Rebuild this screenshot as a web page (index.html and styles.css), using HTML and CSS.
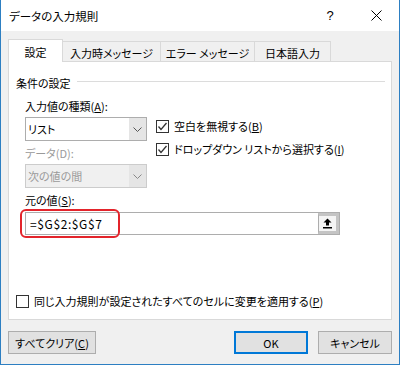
FILE: index.html
```html
<!DOCTYPE html>
<html lang="ja">
<head>
    <meta charset="UTF-8">
    <title>データの入力規則</title>
    <link rel="stylesheet" href="styles.css">
</head>
<body>
    <div class="dialog">
        <div class="titlebar">
            <span class="title">データの入力規則</span>
            <span class="title-btn help">?</span>
            <span class="title-btn close">
                <svg width="11" height="11" viewBox="0 0 11 11">
                    <path d="M0.5 0.5 L10.5 10.5 M10.5 0.5 L0.5 10.5" stroke="#000" stroke-width="1" fill="none"/>
                </svg>
            </span>
        </div>

        <div class="content">
            <div class="tabs">
                <div class="tab active tab-settings">設定</div>
                <div class="tab tab-input">入力時メッセージ</div>
                <div class="tab tab-error">エラー メッセージ</div>
                <div class="tab tab-ime">日本語入力</div>
            </div>

            <div class="panel">
                <div class="group-title">条件の設定</div>

                <div class="criteria">
                    <div class="col-left">
                        <div class="label">入力値の種類(<u>A</u>):</div>
                        <div class="select">
                            <span class="select-value">リスト</span>
                            <span class="select-arrow">
                                <svg width="9" height="5" viewBox="0 0 9 5"><path d="M0.5 0.5 L4.5 4.5 L8.5 0.5" stroke="#555" fill="none"/></svg>
                            </span>
                        </div>
                        <div class="label disabled spaced">データ(D):</div>
                        <div class="select disabled">
                            <span class="select-value">次の値の間</span>
                            <span class="select-arrow">
                                <svg width="9" height="5" viewBox="0 0 9 5"><path d="M0.5 0.5 L4.5 4.5 L8.5 0.5" stroke="#888" fill="none"/></svg>
                            </span>
                        </div>
                    </div>

                    <div class="col-right">
                        <div class="check-row">
                            <span class="check checked">
                                <svg width="11" height="11" viewBox="0 0 11 11"><path d="M1.5 5.5 L4 8.5 L9.5 2" stroke="#333" stroke-width="1.3" fill="none"/></svg>
                            </span>
                            <span>空白を無視する(<u>B</u>)</span>
                        </div>
                        <div class="check-row">
                            <span class="check checked">
                                <svg width="11" height="11" viewBox="0 0 11 11"><path d="M1.5 5.5 L4 8.5 L9.5 2" stroke="#333" stroke-width="1.3" fill="none"/></svg>
                            </span>
                            <span>ドロップダウン リストから選択する(<u>I</u>)</span>
                        </div>
                    </div>
                </div>

                <div class="source-block">
                    <div class="label">元の値(<u>S</u>):</div>
                    <div class="source">
                        <span class="source-value">=$G$2:$G$7</span>
                        <span class="ref-btn">
                            <svg width="9" height="11" viewBox="0 0 9 11">
                                <path d="M4.5 0.5 L8.5 4.5 L6 4.5 L6 7.5 L3 7.5 L3 4.5 L0.5 4.5 Z" fill="#000"/>
                                <rect x="0" y="9" width="9" height="1.5" fill="#000"/>
                            </svg>
                        </span>
                        <span class="highlight"></span>
                    </div>
                </div>

                <div class="check-row apply">
                    <span class="check"></span>
                    <span>同じ入力規則が設定されたすべてのセルに変更を適用する(<u>P</u>)</span>
                </div>
            </div>

            <div class="footer">
                <button class="btn btn-clear">すべてクリア(<u>C</u>)</button>
                <button class="btn btn-ok">OK</button>
                <button class="btn btn-cancel">キャンセル</button>
            </div>
        </div>
    </div>
</body>
</html>
```

FILE: styles.css
```css
* {
    box-sizing: border-box;
}

body {
    margin: 0;
    font-family: "Noto Sans CJK JP", "Noto Sans", sans-serif;
    font-size: 11px;
    line-height: 16px;
    color: #000;
    font-feature-settings: "palt";
}

u {
    text-underline-offset: 1px;
}

.dialog {
    width: 400px;
    height: 365px;
    border: 1px solid #2d7fc2;
    border-top: none;
    background: #f0f0f0;
    display: flex;
    flex-direction: column;
}

/* title bar */
.titlebar {
    height: 31px;
    flex: 0 0 auto;
    background: #fff;
    display: flex;
    align-items: center;
    padding-left: 8px;
}

.title {
    flex: 1;
    font-size: 11.5px;
}

.title-btn {
    width: 46px;
    height: 31px;
    display: flex;
    align-items: center;
    justify-content: center;
}

.help {
    font-family: "Liberation Sans", sans-serif;
    font-size: 13px;
}

/* tabs */
.content {
    flex: 1;
    padding: 8px 7px 0;
    display: flex;
    flex-direction: column;
}

.tabs {
    display: flex;
    align-items: flex-end;
    height: 23px;
    margin-bottom: -1px;
    position: relative;
    z-index: 1;
}

.tab {
    height: 20px;
    margin-bottom: 1px;
    margin-left: -1px;
    padding-top: 3px;
    border: 1px solid #d9d9d9;
    border-bottom: none;
    background: #f0f0f0;
    text-align: center;
    white-space: nowrap;
}

.tab.active {
    height: 23px;
    margin-bottom: 0;
    margin-left: 0;
    padding-top: 4px;
    background: #fff;
    position: relative;
    z-index: 1;
}

.tab-settings { width: 55px; }
.tab-input { width: 99px; }
.tab-error { width: 95px; }
.tab-ime { width: 77px; }

/* panel */
.panel {
    background: #fff;
    border: 1px solid #d9d9d9;
    padding: 13px 6px 10px 7px;
}

.group-title {
    display: flex;
    align-items: center;
    gap: 6px;
}

.group-title::after {
    content: "";
    flex: 1;
    border-top: 1px solid #dcdcdc;
    margin-top: -3px;
}

.criteria {
    display: flex;
    margin-top: 7px;
    padding-left: 9px;
}

.col-left {
    width: 122px;
}

.label.spaced {
    margin-top: 4px;
}

.disabled {
    color: #9a9a9a;
}

.select {
    display: flex;
    height: 24px;
    margin-top: 3px;
    border: 1px solid #adadad;
    background: #fff;
}

.select.disabled {
    border-color: #cccccc;
    background: #f0f0f0;
}

.select-value {
    flex: 1;
    padding-left: 2px;
    line-height: 22px;
}

.select-arrow {
    width: 17px;
    background: #e5e5e5;
    display: flex;
    align-items: center;
    justify-content: center;
}

.col-right {
    margin-left: 9px;
    padding-top: 20px;
    display: flex;
    flex-direction: column;
    gap: 7px;
}

.check-row {
    display: flex;
    align-items: center;
    gap: 5px;
    white-space: nowrap;
}

.check {
    width: 13px;
    height: 13px;
    border: 1px solid #333;
    background: #fff;
    display: flex;
    align-items: center;
    justify-content: center;
}

/* source */
.source-block {
    margin-top: 4px;
    padding-left: 9px;
}

.source {
    position: relative;
    display: flex;
    width: 315px;
    height: 23px;
    margin-top: 4px;
    border: 1px solid #adadad;
    background: #fff;
}

.source-value {
    flex: 1;
    padding-left: 4px;
    line-height: 21px;
    font-size: 12px;
    letter-spacing: 0.6px;
}

.ref-btn {
    width: 21px;
    border: 3px solid #c4c4c4;
    border-left: 1px solid #adadad;
    background: #f4f4f4;
    display: flex;
    align-items: center;
    justify-content: center;
}

.highlight {
    position: absolute;
    left: -6px;
    top: -4px;
    width: 100px;
    height: 29px;
    border: 2px solid #e3242b;
    border-radius: 6px;
}

.apply {
    margin-top: 58px;
}

/* footer */
.footer {
    display: flex;
    margin-top: 11px;
}

.btn {
    height: 23px;
    padding: 0;
    border: 1px solid #adadad;
    background: #e1e1e1;
    font: inherit;
    color: #000;
}

.btn-clear {
    width: 88px;
}

.btn-ok {
    width: 74px;
    margin-left: auto;
    border: 2px solid #0078d7;
}

.btn-cancel {
    width: 74px;
    margin-left: 10px;
}
```
